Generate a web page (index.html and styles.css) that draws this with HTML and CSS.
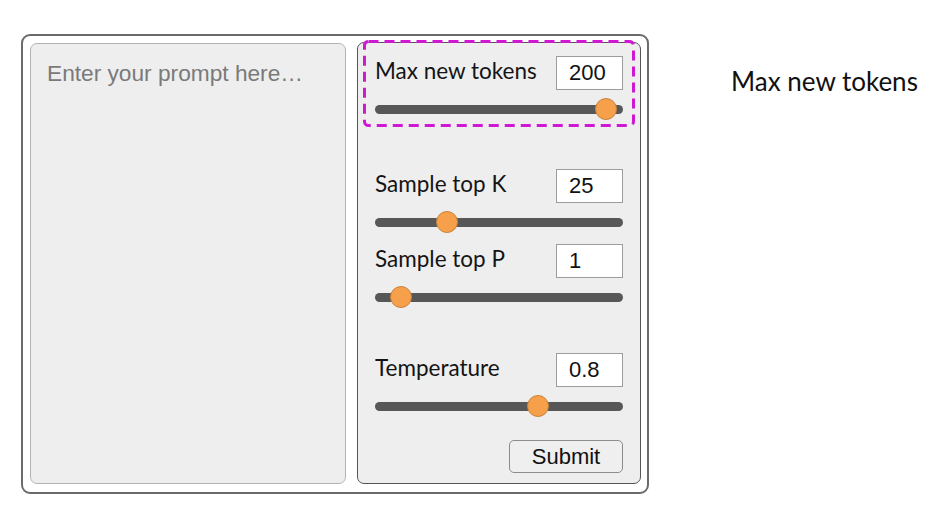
FILE: index.html
```html
<!DOCTYPE html>
<html>
<head>
<meta charset="utf-8">
<link rel="stylesheet" href="styles.css">
</head>
<body>
<div class="page">
  <div class="frame">
    <div class="prompt">Enter your prompt here…</div>
    <div class="panel">
      <svg class="highlight" width="272" height="87" viewBox="0 0 272 87">
        <rect x="1.5" y="1.5" width="269" height="84" rx="4" ry="4" fill="none" stroke="#d018d4" stroke-width="3" stroke-dasharray="10 6"/>
      </svg>
      <div class="field">
        <div class="row"><span class="label">Max new tokens</span><span class="num">200</span></div>
        <div class="slider"><div class="track"></div><div class="thumb" style="left: 231px"></div></div>
      </div>
      <div class="field gap-k">
        <div class="row"><span class="label">Sample top K</span><span class="num">25</span></div>
        <div class="slider"><div class="track"></div><div class="thumb" style="left: 72px"></div></div>
      </div>
      <div class="field gap-p">
        <div class="row"><span class="label">Sample top P</span><span class="num">1</span></div>
        <div class="slider"><div class="track"></div><div class="thumb" style="left: 26px"></div></div>
      </div>
      <div class="field gap-t">
        <div class="row"><span class="label">Temperature</span><span class="num">0.8</span></div>
        <div class="slider"><div class="track"></div><div class="thumb" style="left: 163px"></div></div>
      </div>
      <button class="submit">Submit</button>
    </div>
  </div>
  <div class="caption">Max new tokens</div>
</div>
</body>
</html>
```
FILE: styles.css
```css
html, body {
  margin: 0;
  background: #ffffff;
}
.page {
  display: flex;
  align-items: flex-start;
  padding: 34px 0 0 21px;
}
.frame {
  box-sizing: border-box;
  width: 628px;
  height: 460px;
  border: 2px solid #6b6b6b;
  border-radius: 9px;
  padding: 6px 6px 8px 7px;
  display: flex;
  gap: 11px;
}
.prompt {
  box-sizing: border-box;
  width: 316px;
  margin-top: 1px;
  background: #eeeeee;
  border: 1px solid #b3b3b3;
  border-radius: 7px;
  padding: 16px 16px;
  font-family: "Liberation Sans", Arial, sans-serif;
  font-size: 22.7px;
  color: #7a7a7a;
}
.panel {
  position: relative;
  box-sizing: border-box;
  width: 284px;
  background: #eeeeee;
  border: 1px solid #555555;
  border-radius: 7px;
  padding: 13px 17px 0 17px;
  display: flex;
  flex-direction: column;
}
.highlight {
  position: absolute;
  left: 5px;
  top: -3px;
}
.field {
  display: flex;
  flex-direction: column;
}
.gap-k { margin-top: 49px; }
.gap-p { margin-top: 11px; }
.gap-t { margin-top: 45px; }
.row {
  display: flex;
  justify-content: space-between;
  align-items: center;
  height: 34px;
}
.label {
  font-family: Lato, "Noto Sans", sans-serif;
  font-size: 22.5px;
  color: #141414;
  padding-bottom: 6px;
}
.num {
  box-sizing: border-box;
  width: 67px;
  height: 34px;
  background: #ffffff;
  border: 1px solid #9c9c9c;
  padding-left: 12px;
  font-family: "Liberation Sans", Arial, sans-serif;
  font-size: 22px;
  line-height: 32px;
  color: #111111;
}
.slider {
  position: relative;
  height: 22px;
  margin-top: 8px;
}
.track {
  position: absolute;
  left: 0;
  right: 0;
  top: 7px;
  height: 9px;
  border-radius: 5px;
  background: #575757;
}
.thumb {
  position: absolute;
  top: 0;
  width: 22px;
  height: 22px;
  margin-left: -11px;
  box-sizing: border-box;
  border-radius: 50%;
  background: #f6a04b;
  border: 1px solid #c7833c;
}
.submit {
  align-self: flex-end;
  margin-top: 23px;
  width: 114px;
  height: 33px;
  box-sizing: border-box;
  background: #efefef;
  border: 1px solid #8c8c8c;
  border-radius: 5px;
  font-family: "Liberation Sans", Arial, sans-serif;
  font-size: 22px;
  color: #111111;
  padding: 0;
}
.caption {
  margin: 32px 0 0 82px;
  font-family: Lato, "Noto Sans", sans-serif;
  font-size: 26px;
  line-height: 31px;
  color: #111111;
  white-space: nowrap;
}
```
